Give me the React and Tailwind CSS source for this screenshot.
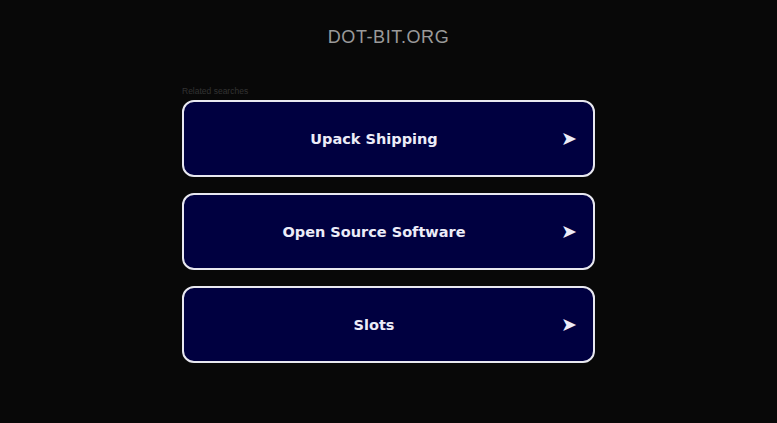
export default function App() {
  const items = ["Upack Shipping", "Open Source Software", "Slots"];

  return (
    <div className="min-h-[423px] bg-[#080808] flex flex-col items-center">
      <h1 className="mt-[26px] text-[18px] leading-[22px] tracking-[0.6px] text-[#9a9a9a] font-['Liberation_Sans',Arial,sans-serif]">
        DOT-BIT.ORG
      </h1>

      <div className="mt-[37px] w-[413px]">
        <div className="text-[8.5px] leading-[12px] text-[#333333] font-['Liberation_Sans',Arial,sans-serif]">
          Related searches
        </div>

        <div className="mt-[3px] flex flex-col gap-[16px]">
          {items.map((item, index) => (
            <a
              key={index}
              href="#"
              className="relative flex items-center justify-center h-[77px] rounded-[12px] border-2 border-[#e8e8f0] bg-[#000040] text-[#ececf8] font-['DejaVu_Sans',sans-serif] font-bold text-[14.5px]"
            >
              <span className="mr-[29px] pt-[3px]">{item}</span>
              <span className="absolute right-[16px] text-[19px] leading-none">➤</span>
            </a>
          ))}
        </div>
      </div>
    </div>
  );
}
